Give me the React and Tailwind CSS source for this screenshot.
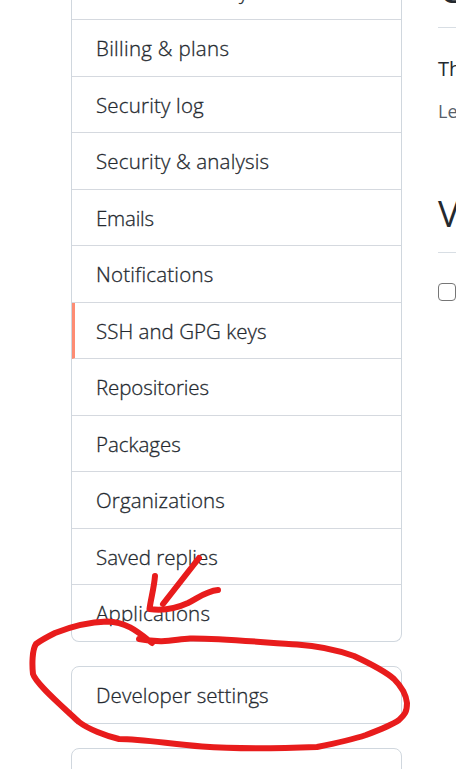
const items = [
  { label: 'Account security', row: 'h-[57px] -mt-[37px]', text: 'tracking-[0.05px]' },
  { label: 'Billing & plans', row: 'h-[57px]', text: 'tracking-[0.3px]' },
  { label: 'Security log', row: 'h-[56px]', text: 'tracking-[0.18px]' },
  { label: 'Security & analysis', row: 'h-[57px]', text: 'tracking-[0.17px]' },
  { label: 'Emails', row: 'h-[56px]', text: 'tracking-[-0.2px]' },
  { label: 'Notifications', row: 'h-[57px]', text: 'tracking-[0.2px]' },
  { label: 'SSH and GPG keys', row: 'h-[56px]', text: 'tracking-[0.03px]', active: true },
  { label: 'Repositories', row: 'h-[57px]', text: 'tracking-[-0.1px]' },
  { label: 'Packages', row: 'h-[56px]', text: 'tracking-[0px]' },
  { label: 'Organizations', row: 'h-[57px]', text: 'tracking-[0.12px]' },
  { label: 'Saved replies', row: 'h-[56px]', text: 'tracking-[0px]' },
  { label: 'Applications', row: 'h-[56px]', text: 'tracking-[0.2px]' },
];

function MenuItem({ label, row, text, active }) {
  return (
    <a
      className={`flex shrink-0 items-center border-b border-[#d5d9df] last:border-b-0 ${row} ${
        active ? 'border-l-[3px] border-l-[#fd8c73] pl-[21px]' : 'pl-6'
      }`}
    >
      <span className={`whitespace-nowrap text-[20.5px] font-light leading-[30px] [-webkit-text-stroke:0.3px_#24292f] ${text}`}>
        {label}
      </span>
    </a>
  );
}

function Annotation() {
  return (
    <svg
      className="pointer-events-none absolute inset-0"
      width="456"
      height="769"
      viewBox="0 0 456 769"
      fill="none"
      stroke="#e81c1c"
      strokeWidth="6"
      strokeLinecap="round"
      strokeLinejoin="round"
    >
      <path d="M155 576 C154 588 151 598 149.500 609 C163 611 177 608 188 603 C198 598 206 591 218 590" />
      <path d="M199 558 L163 604" />
      <path d="M152 643 C138 632 127 622 107 621.500 C91 622 70 627 55 633 C47 637 40 641 36 644 C32 650 32 665 33 674 C36 684 62 706 79 722 C88 729 106 736 119 739 C142 739 170 744 202 746.500 C235 749 290 748 317 747 C332 744 351 740 366 735 C382 729 392 725 399 720 C405 714 407 712 407 703 C406 694 402 687 394 679 C385 671 369 663 354 656 C337 650 320 646 297 644.500 C270 643 220 638 190 638.500 C175 639 166 644 139 639" />
    </svg>
  );
}

export default function App() {
  return (
    <div className="relative flex h-[769px] w-[456px] overflow-hidden bg-white font-['Open_Sans','Noto_Sans',sans-serif] text-[#24292f]">
      <aside className="ml-[71px] flex w-[331px] shrink-0 flex-col">
        <nav className="flex h-[642px] shrink-0 flex-col rounded-b-[8px] border border-t-0 border-[#d0d7de]">
          {items.map((item) => (
            <MenuItem key={item.label} {...item} />
          ))}
        </nav>
        <nav className="mt-6 flex h-[58px] shrink-0 flex-col rounded-[8px] border border-[#d0d7de]">
          <MenuItem label="Developer settings" row="h-[56px]" text="tracking-[0.08px]" />
        </nav>
        <nav className="mt-6 h-[58px] shrink-0 rounded-[8px] border border-[#d0d7de]" />
      </aside>
      <main className="ml-9 w-[600px] shrink-0 whitespace-nowrap">
        <h2 className="-mt-[37px] h-[65px] border-b border-[#d8dee4] pl-[1px] text-[36px] leading-[54px]">GPG keys</h2>
        <p className="mt-[26px] text-[20px] leading-[30px]">There are no GPG keys associated with your account.</p>
        <p className="mt-[14px] text-[18px] leading-[27px] text-[#57606a]">Learn how to generate a GPG key</p>
        <h2 className="mt-[62px] h-[66px] border-b border-[#d8dee4] text-[36px] leading-[54px]">Vigilant mode</h2>
        <div className="mt-[30px] flex items-center gap-2">
          <span className="h-[18px] w-[18px] rounded-[4px] border-[1.5px] border-[#767676] bg-white" />
          <span className="text-[20px] leading-[18px]">Flag unsigned commits as unverified</span>
        </div>
      </main>
      <Annotation />
    </div>
  );
}
